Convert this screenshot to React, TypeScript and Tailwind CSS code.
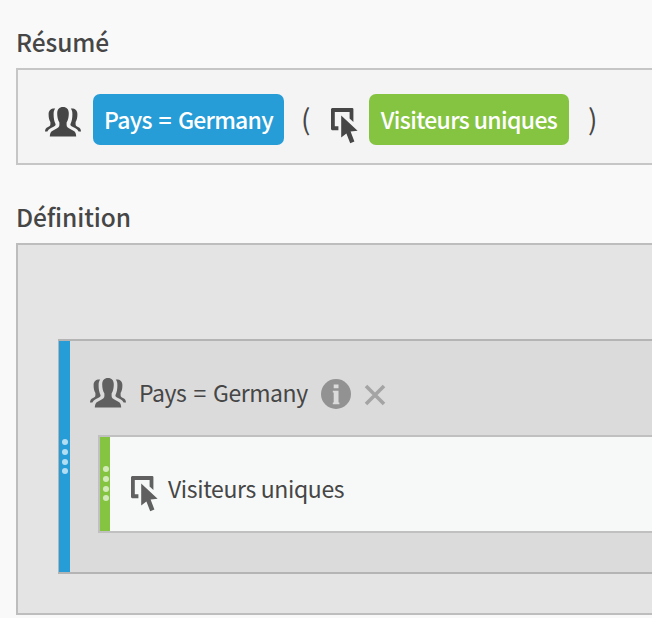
import type { ReactNode } from "react";

function VisitorsIcon({ className = "" }: { className?: string }) {
  return (
    <svg width="36" height="30" viewBox="0 0 36 30" fill="currentColor" className={className}>
      <path d="M18 0C14.2 0 12.2 2.3 12.2 6.3C12.2 9.8 12.8 13 14.4 15.6V18C14.4 20 13 20.8 11.2 21.8L7.2 24C5.6 24.9 5 26.4 4.8 29.6H31.2C31 26.4 30.4 24.9 28.8 24L24.8 21.8C23 20.8 21.6 20 21.6 18V15.6C23.2 13 23.8 9.8 23.8 6.3C23.8 2.3 21.8 0 18 0Z" />
      <path d="M10.2 1.6C6.4 1.2 3.6 3 3.6 7.2C3.6 10.8 4.2 13.2 5.4 15V17.2C5.4 18.8 4.4 19.2 3 20C.8 21 .1 22.2 0 24.6H2.4C3 22.8 4.4 21.8 6 21L9 19.4C10.2 18.8 10.6 18.2 10.6 17.2C9.2 14.6 8.6 11 8.6 7.2C8.6 4.8 9 3 10.2 1.6Z" />
      <path d="M25.8 1.6C29.6 1.2 32.4 3 32.4 7.2C32.4 10.8 31.8 13.2 30.6 15V17.2C30.6 18.8 31.6 19.2 33 20C35.2 21 35.9 22.2 36 24.6H33.6C33 22.8 31.6 21.8 30 21L27 19.4C25.8 18.8 25.4 18.2 25.4 17.2C26.8 14.6 27.4 11 27.4 7.2C27.4 4.8 27 3 25.8 1.6Z" />
    </svg>
  );
}

function MetricIcon({ className = "" }: { className?: string }) {
  return (
    <svg width="27" height="36" viewBox="0 0 27 36" fill="currentColor" className={className}>
      <path d="M1 0H21.6L22.4 .8V14L18.6 10.6V3.9H3.8V18.2H7.4V22.3H1L0 21.3V1Z" />
      <path d="M10.2 7.4L26.6 22.8L19.6 23.6L23.4 33.4L19.2 35.2L15.4 25.4L10.2 29.4Z" />
    </svg>
  );
}

function Grip({ className = "" }: { className?: string }) {
  return (
    <div className={`flex flex-col items-center gap-[3.8px] ${className}`}>
      {[0, 1, 2, 3].map((i) => (
        <span key={i} className="size-[6px] shrink-0 rounded-full bg-white/65" />
      ))}
    </div>
  );
}

function Heading({ children, className = "" }: { children: ReactNode; className?: string }) {
  return (
    <h2 className={`text-[24.5px] font-medium tracking-[-0.1px] whitespace-nowrap text-[#464646] ${className}`}>
      {children}
    </h2>
  );
}

export default function App() {
  return (
    <main className="h-[618px] w-[652px] overflow-hidden bg-[#f9f9f9] pl-4 font-['Noto_Sans_CJK_SC','Noto_Sans',sans-serif] text-[23px] text-[#464646]">
      <Heading className="h-[68px] pt-[25px] leading-[34px]">Résumé</Heading>
      <section className="flex h-[97px] items-start border-2 border-r-0 border-[#c6c6c6] bg-[#f4f4f4] pl-[27px] whitespace-nowrap">
        <VisitorsIcon className="mt-[37px] shrink-0 text-[#464646]" />
        <span className="mt-6 ml-3 flex h-[51px] w-[191px] shrink-0 items-center justify-center rounded-[7px] bg-[#269dd6] font-medium tracking-[-0.75px] text-white [word-spacing:2.5px]">
          Pays = Germany
        </span>
        <span className="mt-[29px] ml-[17px] w-[30px] shrink-0 text-[28px] leading-[38px]">(</span>
        <MetricIcon className="mt-[38px] shrink-0 text-[#464646]" />
        <span className="mt-6 ml-[11px] flex h-[51px] w-[200px] shrink-0 items-center justify-center rounded-[7px] bg-[#85c441] font-medium tracking-[-0.65px] text-white">
          Visiteurs uniques
        </span>
        <span className="mt-[29px] ml-[19px] shrink-0 text-[28px] leading-[38px]">)</span>
      </section>
      <Heading className="h-[78px] pt-[35px] leading-[34px]">Définition</Heading>
      <section className="h-[372px] border-2 border-r-0 border-[#bdbdbd] bg-[#e4e4e4] pt-[94px] pl-10">
        <div className="flex h-[235px] border-y-2 border-l border-[#b4b4b4] bg-[#dbdbdb]">
          <div className="w-[11px] shrink-0 bg-[#269dd6] pt-[98px]">
            <Grip />
          </div>
          <div className="flex-1 pl-[28px]">
            <div className="flex h-[94px] items-start whitespace-nowrap">
              <VisitorsIcon className="mt-[37px] -ml-2 shrink-0 text-[#606060]" />
              <span className="mt-[34px] ml-[13px] w-[182px] shrink-0 leading-[34px] tracking-[-0.45px] [word-spacing:2.5px]">
                Pays = Germany
              </span>
              <svg width="30" height="30" viewBox="0 0 30 30" className="mt-[38px] shrink-0">
                <circle cx="15" cy="15" r="15" fill="#929292" />
                <path d="M12.7 5.5h4.8v3.8h-4.8zM11.8 11.8h5.7v11.6h.9v1.8h-6.6v-1.8h.9v-9.8h-.9z" fill="#dbdbdb" />
              </svg>
              <svg width="22" height="22" viewBox="0 0 22 22" className="mt-[43px] ml-[13px] shrink-0">
                <path d="M2 2L20 20M20 2L2 20" stroke="#a4a4a4" strokeWidth="3.6" />
              </svg>
            </div>
            <div className="flex h-[98px] border-2 border-r-0 border-[#c0c0c0] bg-[#f6f9f8]">
              <div className="w-[10px] shrink-0 bg-[#85c441] pt-[29px] pl-px">
                <Grip />
              </div>
              <MetricIcon className="mt-[39px] ml-[21px] shrink-0 text-[#606060]" />
              <span className="mt-[34px] ml-[10px] leading-[34px] tracking-[-0.37px] whitespace-nowrap">
                Visiteurs uniques
              </span>
            </div>
          </div>
        </div>
      </section>
    </main>
  );
}
